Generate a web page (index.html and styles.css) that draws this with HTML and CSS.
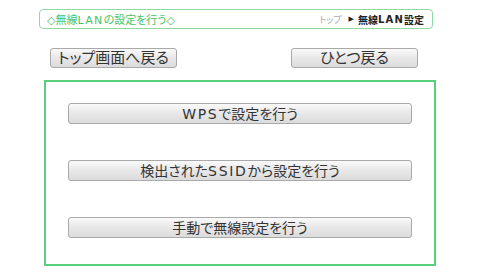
FILE: index.html
```html
<html>
  <head>
    <title>無線LANの設定</title>
    <link rel="stylesheet" href="styles.css">
  </head>
  <body>
    <div class="page">
      <div class="title-bar">
        <span class="title">◇無線<span class="latin">LAN</span>の設定を行う◇</span>
        <span class="crumbs"><span class="crumb-top">トップ</span><span class="arrow">▶</span>無線<span class="latin">LAN</span>設定</span>
      </div>
      <div class="back-row">
        <button class="btn back">トップ画面へ戻る</button>
        <button class="btn back">ひとつ戻る</button>
      </div>
      <div class="panel">
        <button class="btn wide"><span class="latin">WPS</span>で設定を行う</button>
        <button class="btn wide">検出された<span class="latin">SSID</span>から設定を行う</button>
        <button class="btn wide">手動で無線設定を行う</button>
      </div>
    </div>
  </body>
</html>
```

FILE: styles.css
```css
body {
  margin: 0;
  padding: 0;
  background: #fff;
  font-family: "DejaVu Sans", "Noto Sans CJK JP", sans-serif;
  color: #333;
}
.page {
  width: 480px;
  padding-top: 9px;
}
.latin {
  letter-spacing: 0.12em;
}
.title-bar {
  display: flex;
  align-items: center;
  justify-content: space-between;
  box-sizing: border-box;
  margin-left: 39px;
  width: 394px;
  height: 20px;
  padding: 0 8px 0 7px;
  border: 1px solid #8fdaa3;
  border-radius: 4px;
}
.title {
  font-size: 11px;
  color: #45c465;
  font-feature-settings: "palt";
}
.crumbs {
  display: flex;
  align-items: center;
  font-size: 10px;
  font-weight: bold;
  color: #222;
}
.crumb-top {
  font-size: 9px;
  font-weight: normal;
  color: #aaa;
  font-feature-settings: "palt";
}
.arrow {
  font-size: 7px;
  margin: 0 4px 0 7px;
}
.back-row {
  display: flex;
  justify-content: space-between;
  margin: 19px 0 0 50px;
  width: 368px;
}
.btn {
  box-sizing: border-box;
  border: 1px solid #a9a9a9;
  border-radius: 3px;
  background: linear-gradient(#fafafa, #e9e9e9 45%, #dcdcdc);
  color: #333;
  font-family: "DejaVu Sans", "Noto Sans CJK JP", sans-serif;
  font-feature-settings: "palt";
  padding: 0;
  line-height: 1;
}
.back {
  width: 127px;
  height: 20px;
  font-size: 15px;
}
.panel {
  display: flex;
  flex-direction: column;
  gap: 36px;
  box-sizing: border-box;
  margin: 12px 0 0 44px;
  width: 392px;
  height: 186px;
  padding: 21px 0 0 22px;
  border: 2px solid #5ccf7b;
}
.wide {
  width: 344px;
  height: 21px;
  font-size: 14px;
}
```
